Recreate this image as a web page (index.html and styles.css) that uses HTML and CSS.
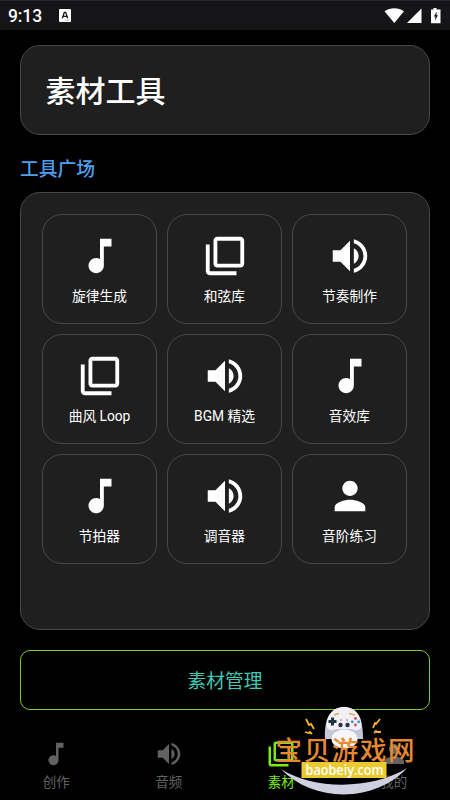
FILE: index.html
```html
<!DOCTYPE html>
<html lang="zh-CN">
<head>
<meta charset="utf-8">
<title>素材工具</title>
<link rel="stylesheet" href="styles.css">
</head>
<body>
<svg class="defs" aria-hidden="true">
  <symbol id="note" viewBox="0 0 24 24"><path d="M12 3v10.55c-.59-.34-1.27-.55-2-.55-2.21 0-4 1.79-4 4s1.79 4 4 4 4-1.790 4-4V7h4V3h-6z"/></symbol>
  <symbol id="library" viewBox="0 0 24 24"><path d="M4 6H2v14c0 1.1.9 2 2 2h14v-2H4V6zm16-4H8c-1.1 0-2 .9-2 2v12c0 1.1.9 2 2 2h12c1.1 0 2-.9 2-2V4c0-1.1-.9-2-2-2zm0 14H8V4h12v12z"/></symbol>
  <symbol id="volume" viewBox="0 0 24 24"><path d="M3 9v6h4l5 5V4L7 9H3zm13.5 3c0-1.77-1.02-3.29-2.5-4.03v8.05c1.48-.73 2.5-2.25 2.5-4.02zM14 3.23v2.06c2.89.86 5 3.54 5 6.71s-2.11 5.85-5 6.71v2.06c4.01-.91 7-4.49 7-8.77s-2.99-7.86-7-8.77z"/></symbol>
  <symbol id="person" viewBox="0 0 24 24"><path d="M12 12c2.21 0 4-1.79 4-4s-1.79-4-4-4-4 1.790-4 4 1.790 4 4 4zm0 2c-2.67 0-8 1.340-8 4v2h16v-2c0-2.660-5.330-4-8-4z"/></symbol>
</svg>
<div class="screen">
  <header class="status">
    <span class="time">9:13</span>
    <svg class="ime" viewBox="0 0 12 13"><rect width="12" height="13" rx="1" fill="#fff"/><path d="M3.4 9.3 5.3 3.3h1.4l1.9 6M4.3 7.3h3.4" fill="none" stroke="#151517" stroke-width="1.3"/><path d="M6.5 11.2h4" stroke="#888" stroke-width=".7"/></svg>
    <svg class="signals" viewBox="0 0 58 18"><path d="M.5 4.200C6 .1 14.500.1 20 4.200L10.300 16z"/><path d="M23 16 37.500 1.500V16z"/><path d="M49.500 1h3v1.500H56.500V16.300H47V2.500h2.500z"/><path d="M52.800 4.500 49.800 9.500h1.600l-.4 4 3-5.200h-1.600z" fill="#151517"/></svg>
  </header>
  <main class="content">
    <section class="card hero"><h1>素材工具</h1></section>
    <h2>工具广场</h2>
    <section class="card grid">
      <div class="tile"><svg><use href="#note"/></svg><span>旋律生成</span></div>
      <div class="tile"><svg><use href="#library"/></svg><span>和弦库</span></div>
      <div class="tile"><svg><use href="#volume"/></svg><span>节奏制作</span></div>
      <div class="tile"><svg><use href="#library"/></svg><span>曲风 Loop</span></div>
      <div class="tile"><svg><use href="#volume"/></svg><span>BGM 精选</span></div>
      <div class="tile"><svg><use href="#note"/></svg><span>音效库</span></div>
      <div class="tile"><svg><use href="#note"/></svg><span>节拍器</span></div>
      <div class="tile"><svg><use href="#volume"/></svg><span>调音器</span></div>
      <div class="tile"><svg><use href="#person"/></svg><span>音阶练习</span></div>
    </section>
    <button class="manage">素材管理</button>
  </main>
  <nav class="tabs">
    <div class="tab"><svg><use href="#note"/></svg><span>创作</span></div>
    <div class="tab"><svg><use href="#volume"/></svg><span>音频</span></div>
    <div class="tab active"><svg><use href="#library"/></svg><span>素材</span></div>
    <div class="tab"><svg><use href="#person"/></svg><span>我的</span></div>
  </nav>
  <svg class="brand" viewBox="270 700 150 100">
    <path d="M281 769C313 790 372 790 407 768C375 803 313 803 281 769z" fill="#cfd0e0"/>
    <path d="M325 739C324 723 328 707 344 707S363 723 363 739z" fill="#c5c6d6"/>
    <path d="M327 728C325 717 333 707 344 707S363 717 361 728Q357 732 352 729H336Q331 732 327 728z" fill="#f0f0f6"/>
    <ellipse cx="344.500" cy="739" rx="13" ry="9.500" fill="#f7f7fb"/>
    <path d="M334 715l5-1.500M349 713.500l6 1.500" stroke="#e2aa55" stroke-width="1.500"/>
    <path d="M328.500 721.500h8M332.500 717.500v8" stroke="#253347" stroke-width="3"/>
    <g fill="#253347"><circle cx="340.500" cy="725" r="2.200"/><circle cx="347.500" cy="725" r="2.200"/></g>
    <g fill="#d94a55"><circle cx="355.500" cy="718.500" r="1.400"/><circle cx="355.500" cy="725" r="1.400"/><circle cx="341" cy="720" r=".8"/><circle cx="347" cy="720" r=".8"/></g><g fill="#378ec0"><circle cx="352.300" cy="721.800" r="1.400"/><circle cx="358.700" cy="721.800" r="1.400"/></g>
    <path d="M306 719l3 6 2-1 3 5M305 732l4 1 1-1 2 2M380 719l-4 5-1-1-2 5M381 732h-4l-1-1-2 2" fill="none" stroke="#f5b62c" stroke-width="1.800"/>
    <rect x="301.500" y="762" width="85" height="16" fill="#eaca2e"/>
    <text class="brand-name" x="275.500" y="759.500" textLength="139">宝贝游戏网</text>
    <text class="brand-url" x="305.500" y="774.500" textLength="78" lengthAdjust="spacingAndGlyphs">baobeiy.com</text>
  </svg>
</div>
</body>
</html>
```
FILE: styles.css
```css
* { box-sizing: border-box; }
body { margin: 0; background: #000; font-family: Roboto, "Noto Sans CJK SC", sans-serif; color: #fff; }
.defs { position: absolute; width: 0; height: 0; }
.screen { position: relative; width: 450px; height: 800px; display: flex; flex-direction: column; background: #000; overflow: hidden; }
.status { height: 30px; flex: none; display: flex; align-items: center; padding: 0 8px 0; background: #151517; border-top: 1px solid #29292b; }
.time { font-size: 17.5px; font-weight: 500; width: 51px; letter-spacing: -.1px; }
.ime { width: 12px; height: 13px; }
.signals { width: 58px; height: 18px; margin-left: auto; fill: #fff; }
.content { padding: 15px 20px 0; display: flex; flex-direction: column; }
.card { background: #1f1f1f; border: 1px solid #484848; border-radius: 20px; }
.hero { height: 90px; padding: 3px 0 0 24.5px; display: flex; align-items: center; }
h1 { margin: 0; font-size: 30px; line-height: 40px; font-weight: 500; }
h2 { margin: 20px 0 6.5px; font-size: 18.75px; line-height: 30px; font-weight: 500; color: #4f9fee; }
.grid { height: 438.5px; padding: 21.5px 21px; display: grid; grid-template-columns: repeat(3, 115px); grid-auto-rows: 110px; gap: 10px; align-content: start; }
.tile { border: 1px solid #484848; border-radius: 20px; display: flex; flex-direction: column; align-items: center; padding-top: 18px; }
.tile svg { width: 46px; height: 46px; fill: #fff; flex: none; }
.tile span { font-size: 13.75px; line-height: 20px; margin-top: 7px; white-space: nowrap; }
.manage { height: 60px; margin-top: 20px; padding: 0 0 2px; border: 1px solid #7bd02a; border-radius: 10px; background: #000; color: #40c9b4; font-family: inherit; font-size: 18.75px; }
.tabs { display: grid; grid-template-columns: repeat(4, 1fr); padding-top: 29px; color: #626262; }
.tab { display: flex; flex-direction: column; align-items: center; }
.tab svg { width: 30px; height: 30px; fill: currentColor; }
.tab span { font-size: 13.5px; line-height: 20px; margin-top: 3px; }
.active { color: #7bea12; }
.brand { position: absolute; left: 270px; top: 700px; width: 150px; height: 100px; }
.brand-name { font: 500 26.5px "Noto Sans CJK SC", sans-serif; fill: #e58a2e; }
.brand-url { font: 600 14px "Open Sans", sans-serif; fill: #fff; }
```
